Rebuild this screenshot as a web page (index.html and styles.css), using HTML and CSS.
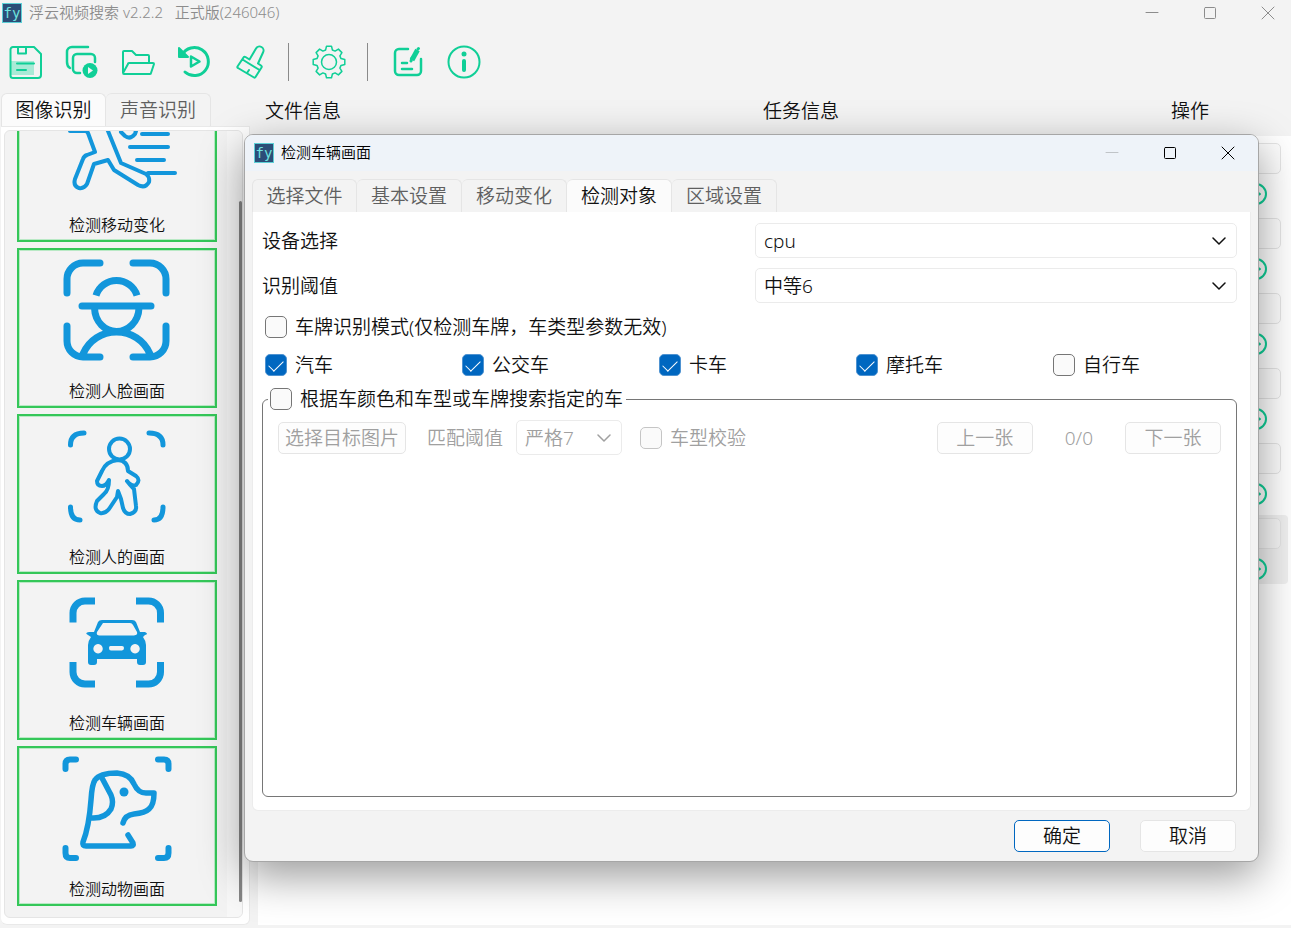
FILE: index.html
```html
<!DOCTYPE html>
<html lang="zh-CN">
<head>
  <meta charset="UTF-8">
  <meta name="viewport" content="width=device-width, initial-scale=1">
  <title>浮云视频搜索</title>
  <link rel="stylesheet" href="styles.css">
</head>
<body>
  <div class="window">
    <header class="titlebar">
      <span class="logo">fy</span>
      <span class="title">浮云视频搜索 v2.2.2 &nbsp; 正式版(246046)</span>
      <div class="win-buttons">
        <button aria-label="最小化"><svg viewBox="0 0 14 14"><path d="M1 6.500h12"/></svg></button>
        <button aria-label="最大化"><svg viewBox="0 0 14 14"><rect x="1.500" y="1.500" width="11" height="11" rx="1"/></svg></button>
        <button aria-label="关闭"><svg viewBox="0 0 14 14"><path d="M1 1l12 12M13 1L1 13"/></svg></button>
      </div>
    </header>

    <!-- 工具栏 -->
    <nav class="toolbar">
      <button aria-label="保存">
        <svg viewBox="0 0 36 36"><path d="M3 17h23v14H3z" fill="#a9ead6" stroke="none"/><path d="M5 3h21l7 7v21a3 3 0 0 1-3 3H5a2.500 2.500 0 0 1-2.500-2.500V5.500A2.500 2.500 0 0 1 5 3zM10 3v6.500h8V3M9 19.500h17M9 26h9"/></svg>
      </button>
      <button aria-label="批量">
        <svg viewBox="0 0 36 36"><path d="M24 3H8a5 5 0 0 0-5 5v10c0 3 1 5 3 6" stroke-width="2.500"/><path d="M16 29h-3a4 4 0 0 1-4-4V14a4 4 0 0 1 4-4h14a4 4 0 0 1 4 4v4" stroke-width="2.500"/><circle cx="26" cy="26.500" r="7.500" fill="#10cf97" stroke="none"/><path d="M24 23l5 3.500-5 3.500z" fill="#f3f3f3" stroke="none"/></svg>
      </button>
      <button aria-label="打开">
        <svg viewBox="0 0 36 36"><path d="M3 29V8a1 1 0 0 1 1-1h8l4 4h12a1 1 0 0 1 1 1v7M3 29l5-9a1 1 0 0 1 1-1h24a1 1 0 0 1 1 1l-3 9a1 1 0 0 1-1 1H4a1 1 0 0 1-1-1z"/></svg>
      </button>
      <button aria-label="历史">
        <svg viewBox="0 0 36 36"><path d="M6 11A14 14 0 1 1 9 28" stroke-width="3"/><path d="M3 4v9h9z" fill="#10cf97"/><path d="M15 12.500l8.500 5-8.500 5z" stroke-width="2.500"/></svg>
      </button>
      <button aria-label="清理">
        <svg viewBox="0 0 36 36"><path d="M17.500 15.500l6.500-11a4 4 0 0 1 7 4l-5 11 3 2a1.500 1.500 0 0 1 .5 2l-6 9.500a1 1 0 0 1-1.500.5L6 24a1 1 0 0 1-.5-1.500l6-9a1.500 1.500 0 0 1 2-.5zM10.500 15.500L27.500 26M15 29l2-3"/></svg>
      </button>
      <span class="separator"></span>
      <button aria-label="设置">
        <svg viewBox="-18 -18 36 36" class="thin"><path d="M15.800-2.500V2.500L12 3.400L10.900 6.100L12.900 9.400L9.400 12.900L6.100 10.900L3.400 12L2.500 15.800H-2.500L-3.400 12L-6.100 10.900L-9.400 12.900L-12.900 9.400L-10.900 6.100L-12 3.400L-15.800 2.500V-2.500L-12-3.400L-10.900-6.100L-12.900-9.400L-9.400-12.900L-6.100-10.900L-3.400-12L-2.500-15.800H2.500L3.400-12L6.100-10.900L9.400-12.900L12.900-9.400L10.900-6.100L12-3.400Z"/><circle r="7.500"/></svg>
      </button>
      <span class="separator"></span>
      <button aria-label="编辑">
        <svg viewBox="0 0 36 36"><path d="M18 5H9a4 4 0 0 0-4 4v18a4 4 0 0 0 4 4h18a4 4 0 0 0 4-4V15M12 19h5M12 25h10" stroke-width="2.500"/><path d="M22 16l5.500-10" stroke-width="5" stroke-linecap="butt"/><path d="M21 17l1-3M28 5l.5-.5" stroke-width="3"/></svg>
      </button>
      <button aria-label="关于">
        <svg viewBox="0 0 36 36"><circle cx="18" cy="18" r="15.500"/><circle cx="18" cy="10" r="2.500" fill="#10cf97" stroke="none"/><path d="M18 17v9" stroke-width="4"/></svg>
      </button>
    </nav>

    <main class="workspace">
      <!-- 左侧功能列表 -->
      <aside class="sidebar">
        <div class="tabs">
          <button class="tab active">图像识别</button>
          <button class="tab">声音识别</button>
        </div>
        <div class="side-panel">
          <div class="side-scroll">
            <div class="cards">
              <button class="card">
                <svg viewBox="0 0 120 120" class="line4"><circle cx="66" cy="8" r="8"/><path d="M51 45L40 20L18 28M64 46l4 4q5 4 10-2l1-3L60 22M13 45h15q2 0 3 2l7 19-8 3q-3 1-4 4l-8 20q-2 7 4 9 5 1 8-4l7-20 14-4 6 10 24 15q7 4 11-3 1-5-3-8L64 77 51 45M85 48h26M73 61h38M80 74h27M91 87h27"/></svg>
                <span>检测移动变化</span>
              </button>
              <button class="card">
                <svg viewBox="0 0 120 120" class="line7"><path d="M10 41V27A16 16 0 0 1 26 11H43M76 11H93A16 16 0 0 1 109 27V41M10 74V89A16 16 0 0 0 26 105H43M76 105H93A16 16 0 0 0 109 89V74M25 54H94M37.500 56C38 70 48 79.500 59.500 79.500S81.500 70 82 56M26 102C32 88 45 80 59.500 80S87 88 93 102"/><path d="M39 43.500A21.500 21.500 0 0 1 80 43.500" stroke-linecap="butt"/></svg>
                <span>检测人脸画面</span>
              </button>
              <button class="card">
                <svg viewBox="0 0 120 120" class="line4"><path d="M13.500 27Q13.500 15 27 15M92 15Q106 15 106 27M13.500 89Q13.500 102 23 102M97 102Q106 102 106 89" stroke-width="5"/><circle cx="62.500" cy="31" r="10.500"/><path d="M61 42C52 43 47 48 45 53L40 63Q40 68 45 68Q49 68 52 62Q52 72 47 76L40 83Q36 92 43 95Q48 96 52 91L60 79L61 73L64 81L66 90Q68 96 73 96Q80 94 79 88L77 71Q73 67 70 63Q75 69 79 67Q84 62 79 58L71 53Q71 43 61 42Z"/></svg>
                <span>检测人的画面</span>
              </button>
              <button class="card">
                <svg viewBox="0 0 120 120" class="line7 flat"><path d="M16 38.500V29A12 12 0 0 1 28 17H38M79 17H91A12 12 0 0 1 103.500 29V38.500M16 78V88A12 12 0 0 0 28 100H38M79 100H91A12 12 0 0 0 103.500 88V78"/><path fill-rule="evenodd" stroke="none" fill="#1296db" d="M45 36H75Q78 36 79 38L83 48H88Q92 50 88 51L86 53Q89 57 89 61V78Q89 81 86 81H83Q80 81 80 78V75H40V78Q40 81 37 81H34Q31 81 31 78V61Q31 57 34 53L31 51Q27 49 32 48H37L41 38Q42 36 45 36ZM46 39L40 48Q39 51 42 51.500H77Q81 51 80 48L76 41Q75 39 73 39ZM41 60a4.700 4.700 0 1 0 .1 0zM78 60a4.700 4.700 0 1 0 .1 0zM54 62H65Q67 62 67 64T65 66.500H54Q52 66.500 52 64T54 62Z"/></svg>
                <span>检测车辆画面</span>
              </button>
              <button class="card">
                <svg viewBox="0 0 120 120" class="line6"><path d="M8.500 19V14Q8.500 9.500 13 9.500H19M101 9.500H107Q111.500 9.500 111.500 14V19M8.500 98V103Q8.500 108 13 108H19M101 108H107Q111.500 108 111.500 103V98"/><path d="M71 85L76 93Q77 96 74 96H29Q25 96 26 92Q32 77 34 50Q35 34 38 30Q43 23 60 23Q73 24 77 34Q81 43 89 43H97Q97 55 92 59Q88 63 77 64Q68 65 66 73M45 28L54 45Q57 52 54 59Q48 69 34 68" stroke-width="5.500"/><circle cx="67" cy="42" r="4.500" fill="#1296db" stroke="none"/></svg>
                <span>检测动物画面</span>
              </button>
            </div>
            <div class="scrollbar"><div class="thumb"></div></div>
          </div>
        </div>
      </aside>

      <!-- 任务列表 -->
      <section class="tasks">
        <div class="task-head">
          <span>文件信息</span>
          <span>任务信息</span>
          <span>操作</span>
        </div>
        <div class="task-list">
          <div class="task"><button class="task-btn" aria-label="操作"></button><button class="task-icon" aria-label="开始"><svg viewBox="0 0 24 24"><circle cx="12" cy="12" r="10"/><path d="M10 8l6 4-6 4z"/></svg></button></div>
          <div class="task"><button class="task-btn" aria-label="操作"></button><button class="task-icon" aria-label="开始"><svg viewBox="0 0 24 24"><circle cx="12" cy="12" r="10"/><path d="M10 8l6 4-6 4z"/></svg></button></div>
          <div class="task"><button class="task-btn" aria-label="操作"></button><button class="task-icon" aria-label="开始"><svg viewBox="0 0 24 24"><circle cx="12" cy="12" r="10"/><path d="M10 8l6 4-6 4z"/></svg></button></div>
          <div class="task"><button class="task-btn" aria-label="操作"></button><button class="task-icon" aria-label="开始"><svg viewBox="0 0 24 24"><circle cx="12" cy="12" r="10"/><path d="M10 8l6 4-6 4z"/></svg></button></div>
          <div class="task"><button class="task-btn" aria-label="操作"></button><button class="task-icon" aria-label="开始"><svg viewBox="0 0 24 24"><circle cx="12" cy="12" r="10"/><path d="M10 8l6 4-6 4z"/></svg></button></div>
          <div class="task selected"><button class="task-btn" aria-label="操作"></button><button class="task-icon" aria-label="开始"><svg viewBox="0 0 24 24"><circle cx="12" cy="12" r="10"/><path d="M10 8l6 4-6 4z"/></svg></button></div>
        </div>
      </section>
    </main>
  </div>

  <!-- 检测车辆画面 对话框 -->
  <div class="dialog" role="dialog" aria-labelledby="dialog-title">
    <header class="titlebar dialog-titlebar">
      <span class="logo">fy</span>
      <span class="title" id="dialog-title">检测车辆画面</span>
      <div class="win-buttons">
        <button aria-label="最小化" disabled><svg viewBox="0 0 14 14"><path d="M1 6.500h12"/></svg></button>
        <button aria-label="最大化"><svg viewBox="0 0 14 14"><rect x="1.500" y="1.500" width="11" height="11" rx="1"/></svg></button>
        <button aria-label="关闭"><svg viewBox="0 0 14 14"><path d="M1 1l12 12M13 1L1 13"/></svg></button>
      </div>
    </header>
    <div class="dialog-body">
      <div class="tabs">
        <button class="tab">选择文件</button>
        <button class="tab">基本设置</button>
        <button class="tab">移动变化</button>
        <button class="tab active">检测对象</button>
        <button class="tab">区域设置</button>
      </div>
      <form class="panel">
        <div class="row">
          <label for="device">设备选择</label>
          <div class="select">
            <select id="device"><option>cpu</option></select>
            <svg viewBox="0 0 14 14"><path d="M1 4l6 6 6-6"/></svg>
          </div>
        </div>
        <div class="row">
          <label for="threshold">识别阈值</label>
          <div class="select">
            <select id="threshold"><option>中等6</option></select>
            <svg viewBox="0 0 14 14"><path d="M1 4l6 6 6-6"/></svg>
          </div>
        </div>
        <div class="checks">
          <label class="check"><input type="checkbox">车牌识别模式(仅检测车牌，车类型参数无效)</label>
        </div>
        <div class="checks types">
          <label class="check"><input type="checkbox" checked>汽车</label>
          <label class="check"><input type="checkbox" checked>公交车</label>
          <label class="check"><input type="checkbox" checked>卡车</label>
          <label class="check"><input type="checkbox" checked>摩托车</label>
          <label class="check"><input type="checkbox">自行车</label>
        </div>
        <fieldset class="group">
          <legend><label class="check"><input type="checkbox">根据车颜色和车型或车牌搜索指定的车</label></legend>
          <div class="group-row">
            <button type="button" class="btn pick" disabled>选择目标图片</button>
            <label for="match" class="muted">匹配阈值</label>
            <div class="select small muted">
              <select id="match" disabled><option>严格7</option></select>
              <svg viewBox="0 0 14 14"><path d="M1 4l6 6 6-6"/></svg>
            </div>
            <label class="check muted"><input type="checkbox" disabled>车型校验</label>
            <div class="pager">
              <button type="button" class="btn" disabled>上一张</button>
              <span class="muted">0/0</span>
              <button type="button" class="btn" disabled>下一张</button>
            </div>
          </div>
        </fieldset>
      </form>
    </div>
    <footer class="dialog-footer">
      <button class="btn primary">确定</button>
      <button class="btn">取消</button>
    </footer>
  </div>
</body>
</html>
```

FILE: styles.css
```css
* {
  box-sizing: border-box;
}
body {
  margin: 0;
  font-family: "Noto Sans", "Noto Sans CJK SC", sans-serif;
  font-size: 19px;
  font-weight: 350;
  line-height: 24px;
  color: #111;
  background-color: #f3f3f3;
}
button, select, input {
  font: inherit;
  color: inherit;
  margin: 0;
}
button {
  padding: 0;
  border: none;
  background: none;
  white-space: nowrap;
}
svg {
  display: block;
  fill: none;
  stroke: currentColor;
  stroke-linecap: round;
  stroke-linejoin: round;
}
.window {
  height: 100vh;
  min-height: 600px;
  display: flex;
  flex-direction: column;
  padding-bottom: 3px;
}

/* titlebar */
.titlebar {
  display: flex;
  align-items: center;
  height: 26px;
  padding-left: 2px;
  font-size: 15px;
  color: #8c8c8c;
}
.logo {
  width: 20px;
  height: 20px;
  border: 1px solid #5ccfd6;
  background-color: #2c4d77;
  color: #6fe3df;
  font-family: "DejaVu Sans Mono", monospace;
  font-size: 14px;
  font-weight: 400;
  line-height: 18px;
  text-align: center;
}
.title {
  margin-left: 7px;
  padding-bottom: 2px;
}
.win-buttons {
  display: flex;
  gap: 12px;
  margin-left: auto;
}
.win-buttons button {
  display: grid;
  place-items: center;
  width: 46px;
  height: 26px;
}
.win-buttons svg {
  width: 14px;
  height: 14px;
}

/* toolbar */
.toolbar {
  display: flex;
  align-items: center;
  gap: 20px;
  height: 67px;
  padding: 4px 8px 0 8px;
  color: #10cf97;
}
.toolbar svg {
  width: 36px;
  height: 36px;
  stroke-width: 2;
}
.toolbar svg.thin {
  stroke-width: 1.5;
}
.separator {
  width: 3px;
  height: 38px;
  border-left: 1px solid #8a8a8a;
}

/* tabs */
.tabs {
  display: flex;
  flex-shrink: 0;
}
.tab {
  width: 105px;
  height: 33px;
  border: 1px solid #e5e5e5;
  border-bottom: none;
  border-left-width: 0;
  border-radius: 6px 6px 0 0;
  color: #5f5f5f;
}
.tab:first-child {
  border-left-width: 1px;
}
.tab.active {
  background-color: #fbfbfb;
  color: #111;
}

.workspace {
  flex: 1;
  min-height: 0;
  display: flex;
  gap: 8px;
}

/* sidebar */
.sidebar {
  display: flex;
  flex-direction: column;
  width: 250px;
  padding-left: 1px;
}
.side-panel {
  flex: 1;
  min-height: 0;
  padding: 3px 6px 6px 3px;
  background-color: #fff;
  border: 1px solid #e9e9e9;
  border-left: none;
  border-radius: 0 0 6px 6px;
}
.side-scroll {
  display: flex;
  justify-content: space-between;
  height: 100%;
  border: 1px solid #e5e5e5;
  border-radius: 6px;
  background-color: #f3f3f3;
  overflow: hidden;
}
.cards {
  display: flex;
  flex-direction: column;
  justify-content: flex-end;
  gap: 6px;
  padding: 0 0 11px 12px;
}
.card {
  display: flex;
  flex-direction: column;
  align-items: center;
  flex-shrink: 0;
  width: 200px;
  height: 160px;
  padding-top: 2px;
  border: 2px solid #34c759;
  box-shadow: inset 0 0 0 1px #b9e9c5;
  font-size: 16px;
}
.card svg {
  width: 120px;
  height: 120px;
  color: #1296db;
}
.card span {
  margin-top: 7px;
}
.line4 {
  stroke-width: 4;
}
.line6 {
  stroke-width: 6;
}
.line7 {
  stroke-width: 7;
}
.flat {
  stroke-linecap: butt;
}
.scrollbar {
  display: flex;
  justify-content: flex-end;
  width: 15px;
  padding: 70px 0 15px 0;
  background-color: #f8f8f8;
}
.thumb {
  width: 3px;
  border-radius: 2px;
  background-color: #868686;
}

/* task list */
.tasks {
  flex: 1;
  display: flex;
  flex-direction: column;
}
.task-head {
  display: grid;
  grid-template-columns: 498fr 408fr 120fr;
  align-items: center;
  height: 43px;
  padding: 0 0 8px 7px;
}
.task-list {
  flex: 1;
  display: flex;
  flex-direction: column;
  gap: 6px;
  padding: 4px 3px 0 0;
  background-color: #fff;
}
.task {
  display: flex;
  flex-direction: column;
  align-items: flex-end;
  height: 69px;
  padding: 3px 7px 0 0;
  border-radius: 4px;
}
.task.selected {
  background-color: #f0f0f0;
}
.task-btn {
  width: 96px;
  height: 31px;
  border: 1px solid #e5e5e5;
  border-radius: 5px;
  background-color: #fdfdfd;
}
.selected .task-btn {
  background-color: #f6f6f6;
}
.task-icon {
  margin: 8px 13px 0 0;
  color: #10cf97;
}
.task-icon svg {
  width: 24px;
  height: 24px;
  stroke-width: 2;
}

/* dialog */
.dialog {
  position: absolute;
  top: 134px;
  right: 32px;
  bottom: 66px;
  left: 244px;
  min-height: 460px;
  display: flex;
  flex-direction: column;
  border: 1px solid #a6a6a6;
  border-radius: 9px;
  background-color: #f3f3f3;
  box-shadow: 0 14px 44px rgba(0, 0, 0, 0.4);
  overflow: hidden;
}
.dialog-titlebar {
  height: 36px;
  padding: 0 7px 0 9px;
  background-color: #eef3f9;
  color: #000;
}
.dialog-titlebar button:disabled {
  color: #c0c4c8;
}
.dialog-body {
  flex: 1;
  min-height: 0;
  display: flex;
  flex-direction: column;
  padding: 8px 7px 0 7px;
}
.panel {
  flex: 1;
  display: flex;
  flex-direction: column;
  padding: 11px 13px 13px 9px;
  border: 1px solid #ececec;
  border-top: none;
  border-radius: 0 0 6px 6px;
  background-color: #fff;
}
.row {
  display: grid;
  grid-template-columns: 1fr 482px;
  align-items: center;
  margin-bottom: 10px;
}
.select {
  display: grid;
  align-items: center;
}
.select select,
.select svg {
  grid-area: 1 / 1;
}
.select select {
  appearance: none;
  width: 100%;
  height: 35px;
  padding: 0 8px;
  border: 1px solid #ebebeb;
  border-radius: 5px;
  background-color: #fff;
  opacity: 1;
}
.select svg {
  justify-self: end;
  width: 14px;
  height: 14px;
  margin-right: 11px;
  stroke-width: 1.5;
  pointer-events: none;
}
.select.small {
  width: 106px;
}
.muted {
  color: #a0a0a0;
}
.checks {
  display: flex;
  height: 28px;
  margin-bottom: 10px;
  padding-left: 3px;
}
.checks.types {
  display: grid;
  grid-template-columns: repeat(5, 1fr);
  gap: 13px;
  margin-bottom: 8px;
}
.check {
  display: flex;
  align-items: center;
  gap: 8px;
  white-space: nowrap;
}
.check input {
  appearance: none;
  display: grid;
  place-items: center;
  width: 22px;
  height: 22px;
  border: 1px solid #767676;
  border-radius: 5px;
  background-color: #fafafa;
}
.check input:checked {
  border-color: #4f93d1;
  background-color: #0067c0;
}
.check input:checked::after {
  content: "";
  width: 13px;
  height: 7px;
  margin-bottom: 3px;
  border: solid #fff;
  border-width: 0 0 1px 1px;
  transform: rotate(-45deg);
}
.check input:disabled {
  border-color: #c5c5c5;
}
.group {
  flex: 1;
  min-width: 0;
  margin: 0;
  padding: 9px 15px 0 15px;
  border: 1px solid #767676;
  border-radius: 6px;
}
.group legend {
  margin-left: -10px;
  padding: 0 3px 0 2px;
}
.group-row {
  display: flex;
  align-items: center;
}
.group-row > label:not(.check) {
  margin: 0 13px 0 21px;
}
.group-row > .check {
  margin-left: 18px;
}
.pager {
  display: flex;
  align-items: center;
  gap: 32px;
  margin-left: auto;
}
.btn {
  width: 96px;
  height: 32px;
  border: 1px solid #e5e5e5;
  border-radius: 5px;
  background-color: #fdfdfd;
}
.btn:disabled {
  color: #a0a0a0;
}
.btn.pick {
  width: 128px;
}
.btn.primary {
  border-color: #0067c0;
}
.dialog-footer {
  display: flex;
  justify-content: flex-end;
  gap: 30px;
  padding: 9px 22px 9px 0;
}
```
